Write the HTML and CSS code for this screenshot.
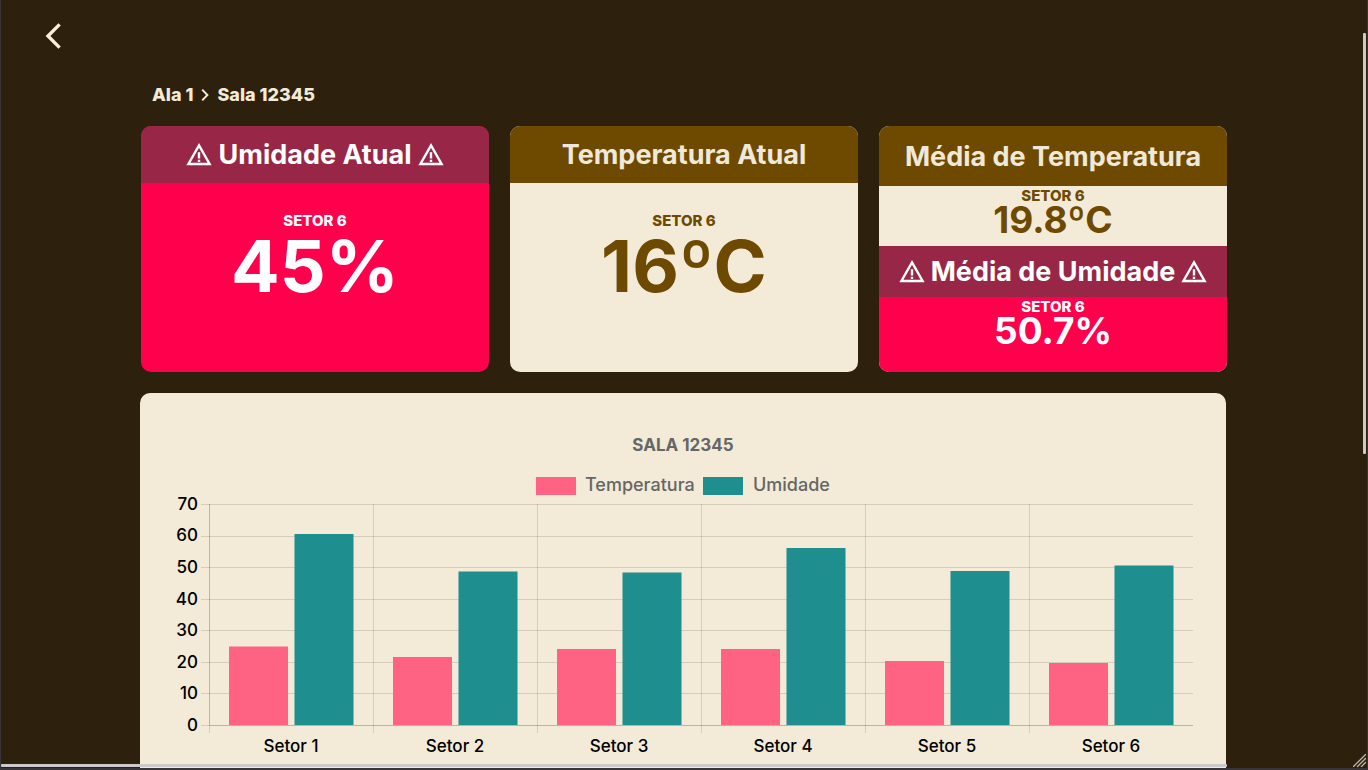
FILE: index.html
```html
<!DOCTYPE html>
<html lang="pt-BR">
<head>
<meta charset="utf-8">
<title>Sala 12345</title>
<link rel="stylesheet" href="styles.css">
</head>
<body>
<svg class="symbols" aria-hidden="true">
  <symbol id="warning" viewBox="0 0 26 24">
    <path d="M13 2.4 L23.6 21 H2.4 Z" fill="none" stroke="currentColor" stroke-width="2.4"/>
    <path d="M11.8 9.2h2.4v6.4h-2.4zM11.8 16.8h2.4v2.2h-2.4z" fill="currentColor"/>
  </symbol>
</svg>
<div class="frame">
  <header class="topbar">
    <button class="back" type="button" aria-label="Voltar">
      <svg width="18" height="28" viewBox="0 0 18 28"><path d="M15.6 2.4 L4 14 L15.6 25.6" fill="none" stroke="currentColor" stroke-width="3.4"/></svg>
    </button>
  </header>
  <main class="content">
    <nav class="crumbs" aria-label="Trilha">
      <a href="#ala">Ala 1</a>
      <svg width="8" height="14" viewBox="0 0 8 14" aria-hidden="true"><path d="M1.2 1.6 L6.4 7 L1.2 12.4" fill="none" stroke="currentColor" stroke-width="2"/></svg>
      <a href="#sala">Sala 12345</a>
    </nav>
    <div class="cards">
      <section class="card alert">
        <h2 class="card-title"><svg class="warn"><use href="#warning"/></svg>Umidade Atual<svg class="warn"><use href="#warning"/></svg></h2>
        <div class="reading">
          <p class="sector">SETOR 6</p>
          <p class="value">45%</p>
        </div>
      </section>
      <section class="card">
        <h2 class="card-title">Temperatura Atual</h2>
        <div class="reading">
          <p class="sector">SETOR 6</p>
          <p class="value">16ºC</p>
        </div>
      </section>
      <div class="card split">
        <section class="half">
          <h2 class="card-title tall">Média de Temperatura</h2>
          <div class="reading small">
            <p class="sector">SETOR 6</p>
            <p class="value">19.8ºC</p>
          </div>
        </section>
        <section class="half grow alert">
          <h2 class="card-title short"><svg class="warn"><use href="#warning"/></svg>Média de Umidade<svg class="warn"><use href="#warning"/></svg></h2>
          <div class="reading small">
            <p class="sector">SETOR 6</p>
            <p class="value">50.7%</p>
          </div>
        </section>
      </div>
    </div>
    <section class="panel">
      <svg class="chart" viewBox="0 0 1086 400" role="img" aria-label="Temperatura e umidade por setor">
        <text class="chart-title" x="543" y="58">SALA 12345</text>
        <g class="legend">
          <rect class="temp" x="396" y="84" width="40" height="18"/>
          <text x="445" y="98">Temperatura</text>
          <rect class="humid" x="563" y="84" width="40" height="18"/>
          <text x="613" y="98">Umidade</text>
        </g>
        <path class="grid" d="M61 111.5H1053M61 143.5H1053M61 174.5H1053M61 206.5H1053M61 237.5H1053M61 269.5H1053M61 300.5H1053M61 332.5H1053M69.5 111V340M233.5 111V340M397.5 111V340M561.5 111V340M725.5 111V340M889.5 111V340"/>
        <path class="grid" d="M69.5 111V332.5H1053"/>
        <g class="scale">
          <text x="58" y="117">70</text>
          <text x="58" y="148">60</text>
          <text x="58" y="180">50</text>
          <text x="58" y="212">40</text>
          <text x="58" y="243">30</text>
          <text x="58" y="275">20</text>
          <text x="58" y="306">10</text>
          <text x="58" y="338">0</text>
        </g>
        <g class="temp">
          <rect x="89" y="253.5" width="59" height="78.5"/>
          <rect x="253" y="264" width="59" height="68"/>
          <rect x="417" y="256" width="59" height="76"/>
          <rect x="581" y="256" width="59" height="76"/>
          <rect x="745" y="268" width="59" height="64"/>
          <rect x="909" y="270" width="59" height="62"/>
        </g>
        <g class="humid">
          <rect x="154.5" y="141" width="59" height="191"/>
          <rect x="318.5" y="178.5" width="59" height="153.5"/>
          <rect x="482.5" y="179.5" width="59" height="152.5"/>
          <rect x="646.5" y="155" width="59" height="177"/>
          <rect x="810.5" y="178" width="59" height="154"/>
          <rect x="974.5" y="172.5" width="59" height="159.5"/>
        </g>
        <g class="sectors">
          <text x="151" y="359">Setor 1</text>
          <text x="315" y="359">Setor 2</text>
          <text x="479" y="359">Setor 3</text>
          <text x="643" y="359">Setor 4</text>
          <text x="807" y="359">Setor 5</text>
          <text x="971" y="359">Setor 6</text>
        </g>
      </svg>
    </section>
  </main>
  <div class="thumb vertical"></div>
  <div class="thumb horizontal"></div>
  <svg class="grip" width="13" height="13" viewBox="0 0 13 13" aria-hidden="true"><path d="M0 13L13 0M4 13L13 4M8 13L13 8" stroke="#bdb9b0" stroke-width="1.3"/></svg>
</div>
</body>
</html>
```
FILE: styles.css
```css
* { box-sizing: border-box; }

body {
  margin: 0;
  background: #2d200c;
  font-family: Inter, "Liberation Sans", sans-serif;
}

h2, p { margin: 0; }

.symbols { position: absolute; width: 0; height: 0; }

.frame {
  position: relative;
  height: 100vh;
  overflow: hidden;
  border: 1px solid #38353a;
  border-top: 0;
  border-bottom-width: 2px;
}

.topbar { padding: 22px 43px 0; }

.back {
  display: block;
  padding: 0;
  border: 0;
  background: none;
  color: #f9eed9;
  cursor: pointer;
}

.back svg { display: block; }

.content {
  max-width: 1088px;
  margin: 0 auto;
}

.crumbs {
  display: flex;
  align-items: center;
  gap: 8px;
  padding: 33px 12px 19px;
  color: #f3ead7;
  font-size: 18px;
  font-weight: 800;
  line-height: 24px;
}

.crumbs a { color: inherit; text-decoration: none; }

.cards {
  display: grid;
  grid-template-columns: repeat(3, 1fr);
  gap: 21px;
  margin-bottom: 21px;
  padding: 0 1px;
}

.card {
  min-height: 246px;
  overflow: hidden;
  border-radius: 10px;
  background: #f3ead7;
  color: #6e4a00;
  text-align: center;
}

.alert { background: #ff004c; color: #fff; }

.card-title {
  display: flex;
  align-items: center;
  justify-content: center;
  gap: 6px;
  height: 57px;
  background: #6e4a00;
  color: #f0e9da;
  font-size: 27px;
  font-weight: 700;
  white-space: nowrap;
}

.card-title.tall { height: 60px; }
.card-title.short { height: 51px; }
.alert .card-title { background: #982747; color: #fff; }

.warn { width: 26px; height: 24px; }

.reading { padding-top: 28px; }
.reading.small { height: 60px; padding-top: 0; }

.sector {
  font-size: 15px;
  font-weight: 800;
  line-height: 20px;
}

.value {
  font-size: 72px;
  font-weight: 700;
  line-height: 70px;
}

.small .value { font-size: 37px; line-height: 28px; }

.split { display: flex; flex-direction: column; }
.grow { flex: 1; }

.panel {
  overflow: hidden;
  margin-right: 2px;
  border-radius: 10px;
  background: #f3ead7;
}

.chart {
  display: block;
  width: 100%;
  font-size: 17px;
  font-weight: 500;
}

.chart-title { fill: #666; font-weight: 700; text-anchor: middle; }
.legend text { fill: #666; font-size: 18px; }
.grid { fill: none; stroke: rgba(0, 0, 0, 0.12); }
.scale { text-anchor: end; }
.sectors { text-anchor: middle; }
.temp { fill: #ff6384; }
.humid { fill: #1e8e8e; }

.thumb {
  position: absolute;
  border-radius: 1px;
  background: #cbc9cb;
}

.vertical { top: 33px; right: 1px; width: 3px; height: 421px; }
.horizontal { bottom: 1px; left: 0; width: 1226px; height: 3px; }

.grip { position: absolute; right: 1px; bottom: 1px; }
```
